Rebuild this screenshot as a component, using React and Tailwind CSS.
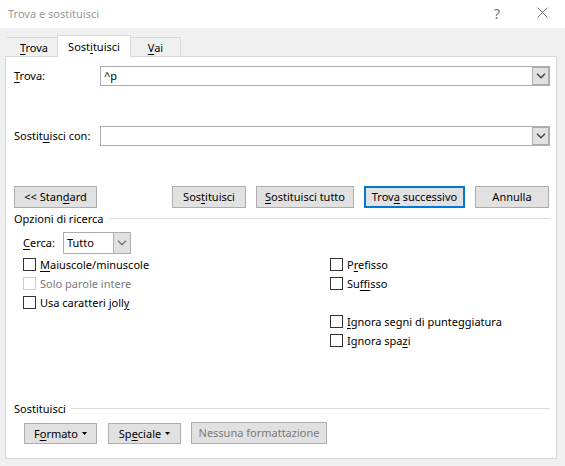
import React from "react";

const U = ({ children }) => (
  <span className="underline decoration-1 underline-offset-2">{children}</span>
);

function Chevron({ className = "text-[#444]" }) {
  return (
    <svg width="10" height="6" viewBox="0 0 10 6" fill="none" stroke="currentColor" strokeWidth="1.4" className={className} aria-hidden="true">
      <path d="M1 0.8 L5 4.8 L9 0.8" />
    </svg>
  );
}

function Tab({ children, active, className = "" }) {
  return (
    <button
      type="button"
      role="tab"
      aria-selected={!!active}
      className={
        "border-[#d9d9d9] text-center leading-4 " +
        (active
          ? "z-10 -mb-px h-[22px] w-[74px] border border-b-0 bg-white "
          : "h-[19px] border-t bg-[#f0f0f0] pt-px ") +
        className
      }
    >
      {children}
    </button>
  );
}

function ComboField({ id, label, value }) {
  return (
    <div className="flex h-5 items-center">
      <label htmlFor={id} className="w-[86px] shrink-0 whitespace-nowrap">
        {label}
      </label>
      <div className="flex h-5 min-w-0 flex-1 border border-[#abadb3] bg-white">
        <input id={id} type="text" defaultValue={value} className="min-w-0 flex-1 bg-transparent px-[3px] outline-none" />
        <button type="button" aria-label="Apri elenco" className="flex w-[17px] items-center justify-center border border-[#abadb3] bg-[#e1e1e1]">
          <Chevron />
        </button>
      </div>
    </div>
  );
}

function Button({ children, className, disabled, menu }) {
  return (
    <button
      type="button"
      disabled={disabled}
      className={
        "flex shrink-0 items-center justify-center whitespace-nowrap bg-[#e1e1e1] disabled:text-[#7a7a7a] " +
        (menu ? "h-[21px] " : "h-[22px] ") +
        className
      }
    >
      <span>{children}</span>
      {menu && <Caret />}
    </button>
  );
}

function Check({ children, disabled }) {
  return (
    <label className={"flex h-[19px] items-center gap-1 whitespace-nowrap " + (disabled ? "text-[#7a7a7a]" : "")}>
      <input
        type="checkbox"
        disabled={disabled}
        className="size-[13px] shrink-0 appearance-none border border-[#333] bg-white checked:bg-[#333] disabled:border-[#ccc]"
      />
      <span>{children}</span>
    </label>
  );
}

function SectionTitle({ children }) {
  return (
    <h2 className="flex h-[15px] items-center gap-[5px]">
      <span>{children}</span>
      <span className="h-px flex-1 bg-[#dcdcdc]" />
    </h2>
  );
}

const Caret = () => (
  <svg width="5" height="3" viewBox="0 0 5 3" className="ml-1" aria-hidden="true">
    <path d="M0 0h5L2.5 3z" fill="#000" />
  </svg>
);

export default function App() {
  return (
    <div className="min-h-screen bg-[#f0f0f0] pb-[7px] font-['Noto_Sans','Open_Sans',sans-serif] text-[11px] leading-4 text-black">
      <header className="flex h-7 items-center bg-white pl-2 pr-[17px] text-[#999]">
        <h1 className="flex-1 font-normal">Trova e sostituisci</h1>
        <button type="button" aria-label="Guida" className="mr-[37px] text-sm leading-4 text-[#777]">?</button>
        <button type="button" aria-label="Chiudi" className="pb-1 text-[#777]">
          <svg width="11" height="11" viewBox="0 0 11 11" fill="none" stroke="currentColor" strokeWidth="1" aria-hidden="true">
            <path d="M0.5 0.5 L10.5 10.5 M10.5 0.5 L0.5 10.5" />
          </svg>
        </button>
      </header>

      <div role="tablist" className="flex h-7 items-end pl-[7px]">
        <Tab className="w-[50px] pl-1">
          <U>T</U>rova
        </Tab>
        <Tab active>
          Sost<U>i</U>tuisci
        </Tab>
        <Tab className="w-[50px] border-r">
          <U>V</U>ai
        </Tab>
      </div>

      <main className="ml-[5px] mr-2 border border-[#d9d9d9] bg-white pb-[14px] pl-2 pr-[6px] pt-[9px]">
        <ComboField id="find" label={<><U>T</U>rova:</>} value="^p" />
        <div className="mt-10">
          <ComboField id="replace" label={<>Sostit<U>u</U>isci con:</>} value="" />
        </div>

        <div className="mt-10 flex gap-2.5 pr-px">
          <Button className="mr-auto w-[83px] border border-[#adadad]">&lt;&lt; Stan<U>d</U>ard</Button>
          <Button className="w-[74px] border border-[#adadad]">Sos<U>t</U>ituisci</Button>
          <Button className="w-[98px] border border-[#adadad]"><U>S</U>ostituisci tutto</Button>
          <Button className="w-[101px] border-2 border-[#0078d7]">Trov<U>a</U> successivo</Button>
          <Button className="w-[74px] border border-[#adadad]">Annulla</Button>
        </div>

        <section className="mt-[3px]">
          <SectionTitle>Opzioni di ricerca</SectionTitle>
          <div className="mt-[6px] flex items-center pl-[9px]">
            <label htmlFor="scope" className="w-10">
              <U>C</U>erca:
            </label>
            <div className="relative h-[22px] w-[68px]">
              <select id="scope" defaultValue="Tutto" className="size-full appearance-none border border-[#abadb3] bg-white pl-[3px] outline-none">
                <option>Tutto</option>
                <option>Su</option>
                <option>Giù</option>
              </select>
              <span className="pointer-events-none absolute inset-y-0 right-0 flex w-[18px] items-center justify-center border border-[#abadb3] bg-[#e1e1e1]">
                <Chevron className="text-[#777]" />
              </span>
            </div>
          </div>
          <div className="mt-px flex pl-[9px]">
            <div className="w-[307px]">
              <Check><U>M</U>aiuscole/minuscole</Check>
              <Check disabled>Solo parole intere</Check>
              <Check>Usa caratteri joll<U>y</U></Check>
            </div>
            <div>
              <Check>P<U>r</U>efisso</Check>
              <Check>Su<U>f</U>fisso</Check>
              <div className="mt-[19px]">
                <Check><U>I</U>gnora segni di punteggiatura</Check>
                <Check>Ignora spa<U>z</U>i</Check>
              </div>
            </div>
          </div>
        </section>

        <section className="mt-[51px]">
          <SectionTitle>Sostituisci</SectionTitle>
          <div className="mt-[6px] flex items-end pl-[10px]">
            <Button menu className="mr-[11px] w-[73px] border border-[#adadad]">F<U>o</U>rmato</Button>
            <Button menu className="mr-[10px] w-[73px] border border-[#adadad]">Sp<U>e</U>ciale</Button>
            <Button disabled className="w-[136px] border border-[#adadad]">Nessuna formattazione</Button>
          </div>
        </section>
      </main>
    </div>
  );
}
